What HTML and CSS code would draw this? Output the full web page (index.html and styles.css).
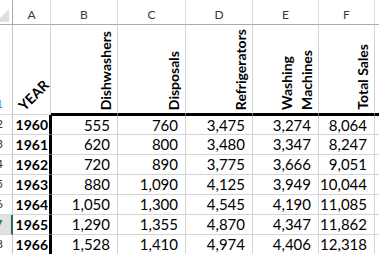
FILE: index.html
```html
<!DOCTYPE html>
<html>
<head>
<meta charset="utf-8">
<link rel="stylesheet" href="styles.css">
</head>
<body>
<div class="viewport">
  <div class="sheet">
    <div class="corner"><span class="tri"></span></div>
    <div class="ch">A</div>
    <div class="ch">B</div>
    <div class="ch">C</div>
    <div class="ch">D</div>
    <div class="ch">E</div>
    <div class="ch">F</div>
    <div class="ch"></div>

    <div class="rh blue">1</div>
    <div class="c year"><span>YEAR</span></div>
    <div class="c vt top"><span>Dishwashers</span></div>
    <div class="c vt top"><span>Disposals</span></div>
    <div class="c vt top"><span>Refrigerators</span></div>
    <div class="c vt top"><span>Washing<br>Machines</span></div>
    <div class="c vt top"><span>Total Sales</span></div>
    <div class="c top"></div>

    <div class="rh">2</div>
    <div class="c yr">1960</div>
    <div class="c num first lb">555</div>
    <div class="c num first">760</div>
    <div class="c num first">3,475</div>
    <div class="c num first">3,274</div>
    <div class="c num first">8,064</div>
    <div class="c first"></div>

    <div class="rh">3</div>
    <div class="c yr">1961</div>
    <div class="c num lb">620</div>
    <div class="c num">800</div>
    <div class="c num">3,480</div>
    <div class="c num">3,347</div>
    <div class="c num">8,247</div>
    <div class="c"></div>

    <div class="rh">4</div>
    <div class="c yr">1962</div>
    <div class="c num lb">720</div>
    <div class="c num">890</div>
    <div class="c num">3,775</div>
    <div class="c num">3,666</div>
    <div class="c num">9,051</div>
    <div class="c"></div>

    <div class="rh">5</div>
    <div class="c yr">1963</div>
    <div class="c num lb">880</div>
    <div class="c num">1,090</div>
    <div class="c num">4,125</div>
    <div class="c num">3,949</div>
    <div class="c num">10,044</div>
    <div class="c"></div>

    <div class="rh">6</div>
    <div class="c yr">1964</div>
    <div class="c num lb">1,050</div>
    <div class="c num">1,300</div>
    <div class="c num">4,545</div>
    <div class="c num">4,190</div>
    <div class="c num">11,085</div>
    <div class="c"></div>

    <div class="rh active">7</div>
    <div class="c yr">1965</div>
    <div class="c num lb">1,290</div>
    <div class="c num">1,355</div>
    <div class="c num">4,870</div>
    <div class="c num">4,347</div>
    <div class="c num">11,862</div>
    <div class="c"></div>

    <div class="rh">8</div>
    <div class="c yr">1966</div>
    <div class="c num lb">1,528</div>
    <div class="c num">1,410</div>
    <div class="c num">4,974</div>
    <div class="c num">4,406</div>
    <div class="c num">12,318</div>
    <div class="c"></div>
  </div>
</div>
</body>
</html>
```

FILE: styles.css
```css
body {
  margin: 0;
  background: #fff;
  font-family: Lato, "Liberation Sans", sans-serif;
}

.viewport {
  width: 379px;
  height: 254px;
  overflow: hidden;
}

.sheet {
  display: grid;
  grid-template-columns: 26px 38px 67px 68px 67px 66px 56px 40px;
  grid-template-rows: 25px 90px repeat(7, 20px);
  margin-left: -13px;
  width: max-content;
}

.sheet > div {
  box-sizing: border-box;
  display: flex;
  min-width: 0;
  overflow: hidden;
}

.corner {
  border-right: 1px solid #ababab;
  border-bottom: 1px solid #ababab;
  justify-content: flex-end;
  align-items: flex-end;
}

.tri {
  width: 0;
  height: 0;
  border-left: 13px solid transparent;
  border-bottom: 13px solid #dfdfdf;
  margin: 0 3px 2px 0;
}

.ch {
  border-right: 1px solid #dadada;
  border-bottom: 1px solid #ababab;
  justify-content: center;
  align-items: flex-start;
  padding-top: 8px;
  font-size: 12px;
  line-height: 14px;
  color: #3a3a3a;
}

.rh {
  border-right: 1px solid #c6c6c6;
  border-bottom: 1px solid #dadada;
  justify-content: center;
  align-items: flex-end;
  padding-bottom: 3px;
  font-size: 12px;
  line-height: 14px;
  color: #333;
}

.rh.blue {
  color: #2f7fc1;
}

.rh.active {
  background: #e1e1e1;
  border-right: 2px solid #217346;
  color: #217346;
  font-weight: 700;
}

.c {
  border-right: 1px solid #d4d4d4;
  border-bottom: 1px solid #d4d4d4;
  font-size: 15px;
  line-height: 17px;
  color: #000;
}

.num {
  justify-content: flex-end;
  align-items: center;
  padding-right: 7px;
}

.yr {
  font-size: 14px;
  font-weight: 700;
  justify-content: flex-end;
  align-items: center;
  padding-right: 1px;
  border-right: 2px solid #000 !important;
}

.lb {
  border-left: 1px solid #000;
}

.top {
  border-bottom: 2px solid #000 !important;
}

.first {
  border-top: 1px solid #000;
}

.vt {
  justify-content: flex-end;
  align-items: flex-end;
  padding: 0 1px 3px 0;
  font-weight: 700;
  font-size: 14px;
  line-height: 20px;
}

.vt span {
  writing-mode: vertical-rl;
  transform: rotate(180deg);
  white-space: nowrap;
}

.sheet > .year {
  justify-content: flex-start;
  align-items: flex-end;
  padding: 0 0 1px 13px;
  overflow: visible;
}

.year span {
  transform-origin: 0 100%;
  transform: rotate(-45deg);
  font-weight: 700;
  font-size: 14px;
  line-height: 14px;
  white-space: nowrap;
}
```
